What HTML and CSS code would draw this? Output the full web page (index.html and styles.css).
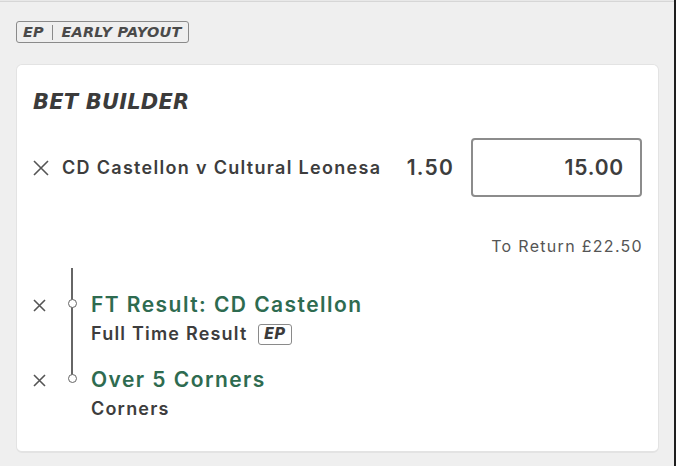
FILE: index.html
```html
<!DOCTYPE html>
<html lang="en">
<head>
<meta charset="utf-8">
<title>Bet Builder</title>
<link rel="stylesheet" href="styles.css">
</head>
<body>
<div class="topline"></div>
<main class="page">
  <div class="ep-banner"><span class="ep-short">EP</span><span class="ep-sep"></span><span class="ep-long">EARLY PAYOUT</span></div>
  <section class="card">
    <h2 class="card-title">BET BUILDER</h2>
    <div class="bet-row">
      <svg class="remove remove-lg" viewBox="0 0 16 16" width="16" height="16" aria-hidden="true"><path d="M1 1 L15 15 M15 1 L1 15"/></svg>
      <span class="match">CD Castellon v Cultural Leonesa</span>
      <span class="odds">1.50</span>
      <div class="stake">15.00</div>
    </div>
    <div class="to-return">To Return £22.50</div>
    <div class="legs">
      <div class="leg leg-first">
        <div class="leg-x"><svg class="remove" viewBox="0 0 13 13" width="13" height="13" aria-hidden="true"><path d="M1 1 L12 12 M12 1 L1 12"/></svg></div>
        <div class="rail"><span class="dot"></span></div>
        <div class="leg-text">
          <div class="leg-title">FT Result: CD Castellon</div>
          <div class="leg-sub">Full Time Result <span class="ep-tag">EP</span></div>
        </div>
      </div>
      <div class="leg leg-last">
        <div class="leg-x"><svg class="remove" viewBox="0 0 13 13" width="13" height="13" aria-hidden="true"><path d="M1 1 L12 12 M12 1 L1 12"/></svg></div>
        <div class="rail"><span class="dot"></span></div>
        <div class="leg-text">
          <div class="leg-title">Over 5 Corners</div>
          <div class="leg-sub">Corners</div>
        </div>
      </div>
    </div>
  </section>
</main>
</body>
</html>
```
FILE: styles.css
```css
* { box-sizing: border-box; }
html, body { margin: 0; }
body {
  background: #efefef;
  font-family: Inter, "Noto Sans", sans-serif;
  color: #3d3d3d;
  height: 466px;
  overflow: hidden;
  border-right: 2px solid #1e1e1e;
}
.topline {
  height: 2px;
  background: #e8e8e8;
  border-bottom: 1px solid #d6d6d6;
}
.page { padding: 19px 15px 0 16px; }

.ep-banner {
  display: inline-flex;
  align-items: center;
  height: 22px;
  border: 1.5px solid #8a8a8a;
  border-radius: 3px;
  padding: 0 6px 0 6px;
  font: italic bold 14.5px/1 "DejaVu Sans", sans-serif;
  color: #4a4a4a;
  letter-spacing: 0.2px;
}
.ep-sep {
  width: 1.5px;
  height: 15px;
  background: #8a8a8a;
  margin: 0 8px;
}

.card {
  margin-top: 21px;
  background: #fff;
  border: 1px solid #e3e3e3;
  border-bottom-width: 2px;
  border-radius: 6px;
  padding: 23px 16px 30px;
}
.card-title {
  margin: 0;
  font: italic bold 21px/28px "DejaVu Sans", sans-serif;
  letter-spacing: 0.2px;
  color: #3b3b3b;
}

.bet-row {
  display: flex;
  align-items: center;
  margin-top: 22px;
  height: 59px;
}
.remove path {
  stroke: #555;
  stroke-width: 1.6;
  fill: none;
}
.remove-lg { flex: none; margin-right: 13px; }
.match {
  flex: 1;
  font-size: 18px;
  font-weight: 600;
  letter-spacing: 1.3px;
  line-height: 22px;
}
.odds {
  font-size: 21px;
  font-weight: 600;
  letter-spacing: 1.2px;
  margin-right: 17px;
}
.stake {
  width: 171px;
  height: 59px;
  border: 2px solid #8c8c8c;
  border-radius: 4px;
  display: flex;
  align-items: center;
  justify-content: flex-end;
  padding-right: 16px;
  font-size: 21px;
  font-weight: 600;
  letter-spacing: 0.8px;
}

.to-return {
  margin-top: 39px;
  text-align: right;
  font-size: 16px;
  line-height: 20px;
  letter-spacing: 1.3px;
  margin-right: -1px;
  color: #555;
}

.legs { margin-top: 12px; }
.leg { display: flex; }
.leg-first { padding-top: 23px; }
.leg-last { padding-top: 20px; }
.leg-x {
  width: 29px;
  height: 28px;
  display: flex;
  align-items: center;
}
.rail {
  position: relative;
  width: 20px;
  margin-right: 9px;
}
.rail::before {
  content: "";
  position: absolute;
  left: 9px;
  width: 2px;
  background: #666;
}
.leg-first .rail { margin-top: -23px; }
.leg-first .rail::before { top: 0; bottom: 0; }
.leg-last .rail { margin-top: -20px; }
.leg-last .rail::before { top: 0; height: 30px; }
.dot {
  position: absolute;
  left: 5.5px;
  width: 9px;
  height: 9px;
  border: 1.8px solid #666;
  border-radius: 50%;
  background: #fff;
}
.leg-first .dot { top: 31px; }
.leg-last .dot { top: 28px; }

.leg-title {
  font-size: 21px;
  font-weight: 600;
  line-height: 28px;
  letter-spacing: 1.45px;
  color: #2e6b50;
}
.leg-sub {
  margin-top: 3px;
  font-size: 18px;
  font-weight: 600;
  line-height: 24px;
  letter-spacing: 1.2px;
  display: flex;
  align-items: center;
}
.ep-tag {
  margin-left: 10px;
  display: inline-flex;
  align-items: center;
  justify-content: center;
  width: 34px;
  height: 21px;
  border: 1.5px solid #8a8a8a;
  border-radius: 3px;
  font: italic bold 15px/1 "DejaVu Sans", sans-serif;
  letter-spacing: 0;
  color: #3b3b3b;
}
```
